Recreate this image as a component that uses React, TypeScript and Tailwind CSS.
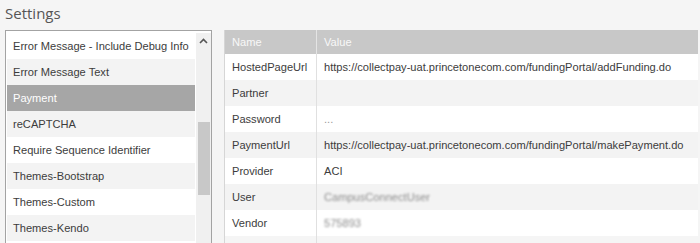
const settings = [
  'Error Message - Include Debug Info',
  'Error Message Text',
  'Payment',
  'reCAPTCHA',
  'Require Sequence Identifier',
  'Themes-Bootstrap',
  'Themes-Custom',
  'Themes-Kendo',
]

type Row = { name: string; value: string; muted?: boolean; blurred?: boolean }

const rows: Row[] = [
  { name: 'HostedPageUrl', value: 'https://collectpay-uat.princetonecom.com/fundingPortal/addFunding.do' },
  { name: 'Partner', value: '' },
  { name: 'Password', value: '...', muted: true },
  { name: 'PaymentUrl', value: 'https://collectpay-uat.princetonecom.com/fundingPortal/makePayment.do' },
  { name: 'Provider', value: 'ACI' },
  { name: 'User', value: 'CampusConnectUser', blurred: true },
  { name: 'Vendor', value: '575893', blurred: true },
]

function SettingsList({ selected }: { selected: string }) {
  return (
    <div className="flex h-[215px] w-[207px] border border-b-0 border-[#a3a3a3] bg-white pl-px pt-[2px]">
      <div className="flex w-[188px] flex-col">
        {settings.map((s, i) => {
          const active = s === selected
          const bg = active ? 'bg-[#a6a6a6] text-white' : i % 2 === 1 ? 'bg-[#f3f3f3] text-[#3c3c3c]' : 'bg-white text-[#3c3c3c]'
          return (
            <div key={s} className={`flex h-[26px] shrink-0 items-center whitespace-nowrap pl-[6px] text-[11.1px] ${bg}`}>
              {s}
            </div>
          )
        })}
      </div>
      {/* scrollbar */}
      <div className="ml-px flex w-[15px] flex-col items-center bg-[#f0f0f0]">
        <svg width="9" height="6" viewBox="0 0 9 6" className="mt-[5px]">
          <path d="M1 5 L4.5 1.5 L8 5" fill="none" stroke="#555" strokeWidth="1.6" />
        </svg>
        <div className="mt-[78px] h-[73px] w-[12px] bg-[#c8c8c8]" />
      </div>
    </div>
  )
}

function ValueTable() {
  return (
    <div className="flex w-[474px] flex-col border-l border-[#d6d6d6] bg-white">
      <div className="flex h-[24px] items-center bg-[#c8c8c8] text-[11.1px] text-[#f8f8f8]">
        <div className="flex h-full w-[92px] items-center border-r border-[#e4e4e4] pl-[7px]">Name</div>
        <div className="pl-[7px]">Value</div>
      </div>
      {rows.map((r, i) => (
        <div
          key={r.name}
          className={`flex h-[26px] items-center whitespace-nowrap text-[11.1px] text-[#3c3c3c] ${i % 2 === 1 ? 'bg-[#f3f3f3]' : 'bg-white'}`}
        >
          <div className="flex h-full w-[92px] items-center border-r border-[#e0e0e0] pl-[7px]">{r.name}</div>
          <div
            className={`pl-[7px] ${r.muted ? 'text-[#999]' : ''} ${r.blurred ? 'text-[#8c8c8c] blur-[1.3px]' : ''}`}
          >
            {r.value}
          </div>
        </div>
      ))}
      <div className="flex flex-1 bg-[#f5f5f5]">
        <div className="w-[92px] border-r border-[#e0e0e0]" />
      </div>
    </div>
  )
}

export default function App() {
  return (
    <div
      className="h-[243px] w-[700px] overflow-hidden bg-[#f5f5f5]"
      style={{ fontFamily: '"Liberation Sans", Arial, sans-serif' }}
    >
      <div
        className="h-[30px] pl-[5px] pt-[2px] text-[15px] text-[#555]"
        style={{ fontFamily: '"Open Sans", sans-serif' }}
      >
        Settings
      </div>
      <div className="flex gap-[12px] pl-[5px]">
        <SettingsList selected="Payment" />
        <ValueTable />
      </div>
    </div>
  )
}
